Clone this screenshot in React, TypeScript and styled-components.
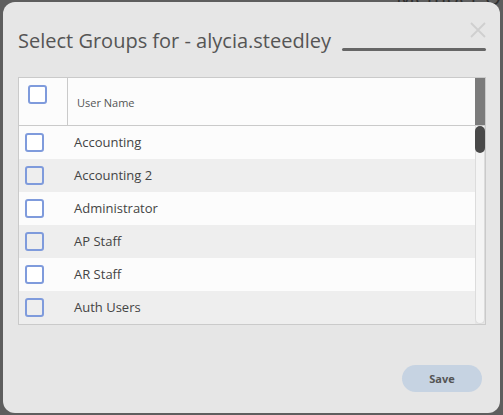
import React from "react";
import styled, { createGlobalStyle } from "styled-components";

const Global = createGlobalStyle`
  html, body { margin: 0; padding: 0; }
  body {
    width: 503px;
    height: 415px;
    overflow: hidden;
    background: #5e5e5e;
    font-family: "Open Sans", "Liberation Sans", sans-serif;
  }
  #root { position: relative; width: 503px; height: 415px; }
`;

const Backdrop = styled.div`
  width: 503px;
  height: 415px;
  background: #5e5e5e;
  overflow: hidden;
`;

const BackdropTitle = styled.div`
  margin-top: -17px;
  padding-left: 396px;
  font-size: 21px;
  color: #2e2e2e;
  white-space: nowrap;
`;

const Modal = styled.div`
  position: absolute;
  left: 3px;
  top: 2px;
  width: 497px;
  height: 411px;
  box-sizing: border-box;
  background: #e6e6e6;
  border-radius: 12px;
  padding: 0 14px 0 15px;
  display: flex;
  flex-direction: column;
`;

const Header = styled.div`
  display: flex;
  align-items: flex-end;
  margin-top: 24px;
  height: 29px;
`;

const Title = styled.h2`
  margin: 0;
  font-weight: 400;
  font-size: 20px;
  line-height: 29px;
  color: #555;
  white-space: nowrap;
`;

const TitleRule = styled.div`
  flex: 1;
  height: 3px;
  border-radius: 2px;
  background: #666;
  margin: 0 0 4px 11px;
`;

const CloseButton = styled.button`
  position: absolute;
  right: 13px;
  top: 19px;
  width: 18px;
  height: 18px;
  padding: 0;
  border: none;
  background: transparent;
  display: flex;
  align-items: center;
  justify-content: center;
`;

const Table = styled.div`
  margin-top: 22px;
  border: 1px solid #cacaca;
  display: flex;
  flex-direction: column;
`;

const HeadRow = styled.div`
  display: flex;
  height: 47px;
  background: #fcfcfc;
  border-bottom: 1px solid #cacaca;
`;

const HeadCheckCell = styled.div`
  width: 49px;
  border-right: 1px solid #cacaca;
  padding: 7px 0 0 9px;
  box-sizing: border-box;
`;

const HeadLabel = styled.div`
  flex: 1;
  display: flex;
  align-items: center;
  padding: 1px 0 0 9px;
  font-size: 11px;
  color: #555;
`;

const HeadScroll = styled.div`
  width: 10px;
  background: #7b7b7b;
`;

const Body = styled.div`
  display: flex;
`;

const Rows = styled.div`
  flex: 1;
  display: flex;
  flex-direction: column;
`;

const Row = styled.div<{ $alt: boolean }>`
  height: 33px;
  display: flex;
  align-items: center;
  background: ${(p) => (p.$alt ? "#eeeeee" : "#fcfcfc")};
  padding-left: 6px;
`;

const RowLabel = styled.span`
  margin-left: 30px;
  margin-top: -1px;
  font-size: 13px;
  color: #444;
`;

const Check = styled.span<{ $alt?: boolean }>`
  display: block;
  width: 19px;
  height: 19px;
  box-sizing: border-box;
  border: 2px solid #7f9bdc;
  border-radius: 3px;
  background: ${(p) => (p.$alt ? "#eeeeee" : "#ffffff")};
`;

const Track = styled.div`
  width: 10px;
  box-sizing: border-box;
  background: #f4f4f4;
  border: 1px solid #dcdcdc;
  border-top: none;
  border-radius: 0 0 5px 5px;
  display: flex;
  flex-direction: column;
`;

const Thumb = styled.div`
  margin: 0 -1px;
  height: 27px;
  border-radius: 5px;
  background: #494949;
`;

const Footer = styled.div`
  display: flex;
  justify-content: flex-end;
  margin-top: 40px;
  padding-right: 4px;
`;

const SaveButton = styled.button`
  width: 80px;
  height: 27px;
  border: none;
  border-radius: 14px;
  background: #c6d3e2;
  color: #555;
  font-family: "Open Sans", "Liberation Sans", sans-serif;
  font-weight: 700;
  font-size: 11px;
  padding: 0;
`;

const groups = [
  "Accounting",
  "Accounting 2",
  "Administrator",
  "AP Staff",
  "AR Staff",
  "Auth Users",
];

export default function App() {
  return (
    <>
      <Global />
      <Backdrop>
        <BackdropTitle>Member Of</BackdropTitle>
      </Backdrop>
      <Modal>
        <Header>
          <Title>Select Groups for - alycia.steedley</Title>
          <TitleRule />
        </Header>
        <CloseButton aria-label="Close">
          <svg width="16" height="16" viewBox="0 0 16 16">
            <path d="M1 1 L15 15 M15 1 L1 15" stroke="#cfcfcf" strokeWidth="1.8" fill="none" />
          </svg>
        </CloseButton>
        <Table>
          <HeadRow>
            <HeadCheckCell>
              <Check />
            </HeadCheckCell>
            <HeadLabel>User Name</HeadLabel>
            <HeadScroll />
          </HeadRow>
          <Body>
            <Rows>
              {groups.map((g, i) => (
                <Row key={g} $alt={i % 2 === 1}>
                  <Check $alt={i % 2 === 1} />
                  <RowLabel>{g}</RowLabel>
                </Row>
              ))}
            </Rows>
            <Track>
              <Thumb />
            </Track>
          </Body>
        </Table>
        <Footer>
          <SaveButton>Save</SaveButton>
        </Footer>
      </Modal>
    </>
  );
}
